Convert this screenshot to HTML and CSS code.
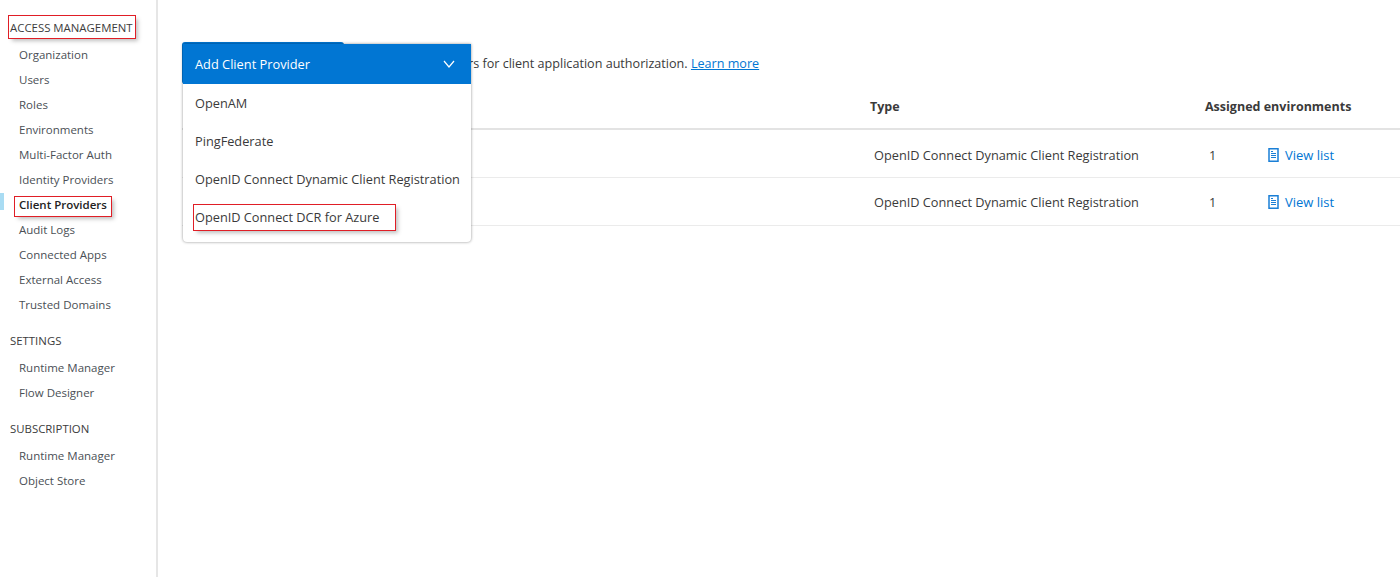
FILE: index.html
```html
<!DOCTYPE html>
<html>
<head>
	<title>Client Providers</title>
	<meta name="viewport" content="width=device-width, initial-scale=1">
	<link rel="stylesheet" href="styles.css">
</head>
<body>
	<nav class="sidebar">
		<h2 class="nav-head first"><span class="mark mark-head">ACCESS MANAGEMENT</span></h2>
		<a class="nav-item">Organization</a>
		<a class="nav-item">Users</a>
		<a class="nav-item">Roles</a>
		<a class="nav-item">Environments</a>
		<a class="nav-item">Multi-Factor Auth</a>
		<a class="nav-item">Identity Providers</a>
		<a class="nav-item active"><span class="mark mark-item">Client Providers</span></a>
		<a class="nav-item">Audit Logs</a>
		<a class="nav-item">Connected Apps</a>
		<a class="nav-item">External Access</a>
		<a class="nav-item">Trusted Domains</a>
		<h2 class="nav-head">SETTINGS</h2>
		<a class="nav-item">Runtime Manager</a>
		<a class="nav-item">Flow Designer</a>
		<h2 class="nav-head">SUBSCRIPTION</h2>
		<a class="nav-item">Runtime Manager</a>
		<a class="nav-item">Object Store</a>
	</nav>
	<main class="content">
		<div class="intro">
			<button class="add-btn"></button>
			<p class="intro-text">rs for client application authorization. <a class="link">Learn more</a></p>
		</div>
		<div class="table">
			<div class="row head">
				<div class="col-name"></div>
				<div class="col-type">Type</div>
				<div class="col-env">Assigned environments</div>
			</div>
			<div class="row">
				<div class="col-name"></div>
				<div class="col-type">OpenID Connect Dynamic Client Registration</div>
				<div class="col-env">
					<span class="count">1</span>
					<a class="view-list">
						<svg class="doc" width="11" height="14" viewBox="0 0 11 14"><path d="M1 .75h9v12.5H1z" fill="#fff" stroke="#1a7fd6" stroke-width="1.5"/><path d="M3 3.5h2M3 5.5h5M3 7.5h5M3 9.5h5" stroke="#1a7fd6"/></svg>
						View list
					</a>
				</div>
			</div>
			<div class="row">
				<div class="col-name"></div>
				<div class="col-type">OpenID Connect Dynamic Client Registration</div>
				<div class="col-env">
					<span class="count">1</span>
					<a class="view-list">
						<svg class="doc" width="11" height="14" viewBox="0 0 11 14"><path d="M1 .75h9v12.5H1z" fill="#fff" stroke="#1a7fd6" stroke-width="1.5"/><path d="M3 3.5h2M3 5.5h5M3 7.5h5M3 9.5h5" stroke="#1a7fd6"/></svg>
						View list
					</a>
				</div>
			</div>
		</div>
		<div class="dropdown">
			<div class="dropdown-head">
				<span>Add Client Provider</span>
				<svg width="12" height="8" viewBox="0 0 12 8"><path d="M1 1l5 6 5-6" fill="none" stroke="#fff" stroke-width="1.2"/></svg>
			</div>
			<ul class="dropdown-list">
				<li>OpenAM</li>
				<li>PingFederate</li>
				<li>OpenID Connect Dynamic Client Registration</li>
				<li><span class="mark mark-option">OpenID Connect DCR for Azure</span></li>
			</ul>
		</div>
	</main>
</body>
</html>
```

FILE: styles.css
```css
body{
	margin: 0;
	display: flex;
	min-height: 577px;
	background-color: #fff;
	color: #3a3a3a;
	font-family: "Open Sans", sans-serif;
	overflow: hidden;
}
.sidebar{
	box-sizing: border-box;
	width: 158px;
	flex: none;
	padding-top: 16px;
	border-right: 2px solid #e6e6e6;
}
.nav-head{
	margin: 11.5px 0 2.5px 10px;
	font-size: 11.4px;
	font-weight: 400;
	line-height: 24px;
	color: #3c3c3c;
}
.nav-head.first{
	margin-top: 0;
	margin-bottom: 2px;
}
.nav-item{
	position: relative;
	display: block;
	height: 25px;
	padding-left: 19px;
	font-size: 11.5px;
	line-height: 25px;
	color: #4a4f55;
}
.nav-item.active{
	font-weight: 600;
	color: #222;
}
.nav-item.active::before{
	content: "";
	position: absolute;
	left: 0;
	top: 1px;
	width: 4px;
	height: 17px;
	background-color: #a9dcf3;
}
.mark{
	outline: 1px solid #e01e26;
	box-shadow: 3px 3px 4px rgba(0,0,0,.25);
}
.mark-head{
	padding: 4px 2px 3px 1px;
	margin-left: -1px;
}
.mark-item{
	padding: 0 4px 4px;
	margin-left: -4px;
}
.mark-option{
	display: inline-block;
	padding: 0 16px 0 1px;
	margin-left: -1px;
	line-height: 25px;
}
.content{
	position: relative;
	flex: 1;
	font-size: 12.75px;
}
.intro{
	display: flex;
	align-items: center;
	height: 42px;
	margin: 42px 0 0 24px;
}
.add-btn{
	width: 162px;
	height: 42px;
	border: none;
	border-radius: 3px;
	background-color: #0176d3;
}
.intro-text{
	margin: 0 0 0 124px;
	font-size: 12.6px;
	white-space: nowrap;
}
.link{
	color: #0176d3;
	text-decoration: underline;
}
.table{
	margin: 0 0 0 24px;
}
.row{
	display: flex;
	align-items: center;
	box-sizing: border-box;
	height: 48px;
	padding-top: 2px;
	border-bottom: 1px solid #ebebeb;
}
.row:last-child{
	padding-top: 0;
}
.row.head{
	height: 46px;
	padding-top: 0;
	border-bottom: 2px solid #e3e3e3;
	font-weight: 700;
	font-size: 12.5px;
}
.col-name{
	width: 688px;
	flex: none;
}
.col-type{
	width: 335px;
	flex: none;
	padding-left: 4px;
	box-sizing: border-box;
}
.head .col-type{
	padding-left: 0;
}
.col-env{
	display: flex;
	align-items: center;
}
.count{
	width: 59px;
	padding-left: 4px;
}
.view-list{
	display: flex;
	align-items: center;
	gap: 6px;
	font-size: 13px;
	color: #0176d3;
}
.dropdown{
	position: absolute;
	left: 25px;
	top: 44px;
	width: 288px;
	height: 198px;
	border-radius: 0 0 4px 4px;
	background-color: #fff;
	box-shadow: 0 0 3px rgba(0,0,0,.45);
}
.dropdown-head{
	display: flex;
	align-items: center;
	justify-content: space-between;
	box-sizing: border-box;
	height: 40px;
	padding: 0 16px 1px 12px;
	background-color: #0176d3;
	color: #fff;
	font-size: 12.8px;
}
.dropdown-list{
	list-style: none;
	margin: 0;
	padding: 0;
}
.dropdown-list li{
	height: 38px;
	padding-left: 12px;
	line-height: 38px;
	font-size: 12.75px;
}
```
